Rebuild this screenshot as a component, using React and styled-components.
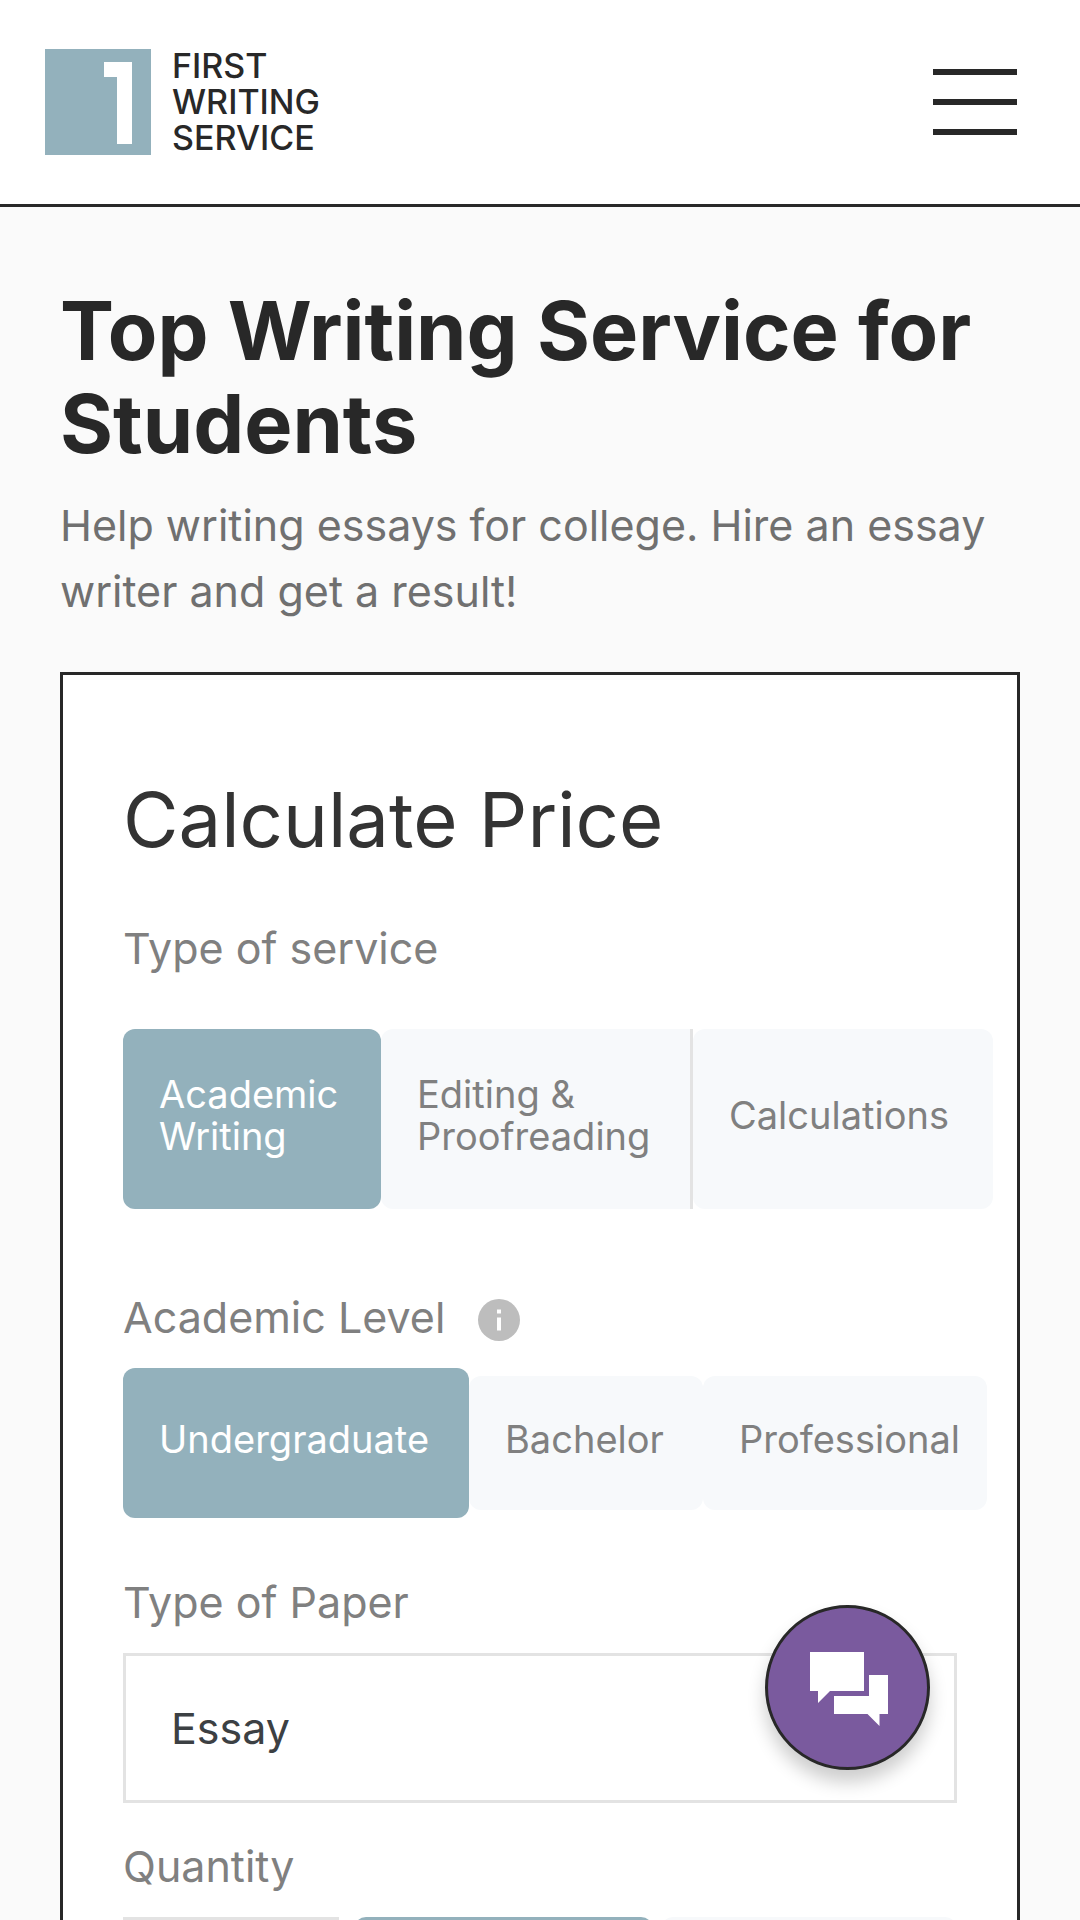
import React, { useState } from 'react';
import styled, { createGlobalStyle } from 'styled-components';

const GlobalStyle = createGlobalStyle`
    * {
        box-sizing: border-box;
    }

    body {
        margin: 0;
        background: #fafafa;
        color: #282828;
        font-family: Inter, Lato, sans-serif;
    }

    button,
    input,
    select {
        font-family: inherit;
    }
`;

const Page = styled.div`
    height: 100vh;
    overflow: hidden;
`;

const Header = styled.header`
    display: flex;
    align-items: center;
    justify-content: space-between;
    height: 207px;
    padding: 0 63px 0 45px;
    background: #fff;
    border-bottom: 3px solid #282828;
`;

const Logo = styled.a`
    display: flex;
    align-items: center;
    gap: 21px;
    color: #282828;
    text-decoration: none;
`;

const LogoMark = styled.svg`
    width: 106px;
    height: 106px;
`;

const LogoText = styled.span`
    display: flex;
    flex-direction: column;
    font-size: 34px;
    font-weight: 500;
    line-height: 36px;
`;

const MenuButton = styled.button`
    display: flex;
    flex-direction: column;
    gap: 24px;
    padding: 0;
    background: none;
    border: 0;
    cursor: pointer;
`;

const MenuBar = styled.span`
    width: 84px;
    height: 6px;
    background: #282828;
`;

const Main = styled.main`
    padding: 78px 60px 0;
`;

const Title = styled.h1`
    margin: 0 0 21px;
    font-size: 81px;
    font-weight: 700;
    line-height: 93px;
`;

const Lead = styled.p`
    margin: 0 0 48px;
    color: #707070;
    font-size: 43px;
    line-height: 66px;
`;

const Card = styled.form`
    padding: 96px 60px 60px;
    background: #fff;
    border: 3px solid #282828;
`;

const CardTitle = styled.h2`
    margin: 0 0 51px;
    color: #333;
    font-size: 76px;
    font-weight: 400;
    line-height: 96px;
`;

const Label = styled.label`
    display: flex;
    align-items: center;
    gap: 33px;
    margin-bottom: ${(props) => props.$space}px;
    color: #808080;
    font-size: 43px;
    line-height: 60px;
`;

const InfoIcon = styled.svg`
    width: 42px;
    height: 42px;
    margin-top: 6px;
`;

const Segments = styled.div`
    display: grid;
    grid-template-columns: ${(props) => props.$columns};
    align-items: center;
    margin: 0 ${(props) => props.$overhang}px ${(props) => props.$space}px 0;
`;

const Segment = styled.button`
    height: ${(props) => props.$height}px;
    padding: 0 24px 9px 36px;
    background: ${(props) => (props.$active ? '#93b1bc' : '#f7f9fb')};
    border: 0;
    border-right: ${(props) => (props.$divider ? '3px solid #e3e3e3' : '0')};
    border-radius: ${(props) => (props.$divider ? '12px 0 0 12px' : '12px')};
    color: ${(props) => (props.$active ? '#fff' : '#808080')};
    font-size: 38px;
    line-height: 42px;
    text-align: left;
    cursor: pointer;
`;

const Select = styled.select`
    display: block;
    width: 100%;
    height: 150px;
    margin-bottom: 33px;
    padding: 0 45px;
    appearance: none;
    background: #fff;
    border: 3px solid #e3e3e3;
    border-radius: 0;
    color: #3c4043;
    font-size: 43px;
`;

const QuantityRow = styled.div`
    display: grid;
    grid-template-columns: 216fr 15fr 299fr 8fr 296fr;
`;

const QuantityInput = styled.input`
    width: 100%;
    height: 150px;
    padding: 0 45px;
    border: 3px solid #e3e3e3;
    font-size: 43px;
`;

const ChatButton = styled.button`
    position: fixed;
    right: 150px;
    bottom: 150px;
    width: 165px;
    height: 165px;
    padding: 3px 0 0 3px;
    background: #7a5a9e;
    border: 3px solid #282828;
    border-radius: 50%;
    box-shadow: 0 12px 18px rgba(0, 0, 0, 0.2);
    cursor: pointer;
`;

const ChatIcon = styled.svg`
    display: block;
    width: 78px;
    height: 74px;
    margin: 0 auto;
`;

const services = ['Academic Writing', 'Editing & Proofreading', 'Calculations'];
const levels = ['Undergraduate', 'Bachelor', 'Professional'];
const papers = ['Essay', 'Research Paper', 'Coursework'];

const App = () => {
    const [service, setService] = useState(services[0]);
    const [level, setLevel] = useState(levels[0]);
    const [spacing, setSpacing] = useState('double');

    return (
        <Page>
            <GlobalStyle />
            <Header>
                <Logo href="#">
                    <LogoMark viewBox="0 0 106 106" aria-hidden="true">
                        <rect width="106" height="106" fill="#93b1bc" />
                        <path d="M59 13H87V95H72V28H59Z" fill="#fff" />
                    </LogoMark>
                    <LogoText>
                        <span>FIRST</span>
                        <span>WRITING</span>
                        <span>SERVICE</span>
                    </LogoText>
                </Logo>
                <MenuButton type="button" aria-label="Menu">
                    <MenuBar />
                    <MenuBar />
                    <MenuBar />
                </MenuButton>
            </Header>
            <Main>
                <Title>Top Writing Service for Students</Title>
                <Lead>Help writing essays for college. Hire an essay writer and get a result!</Lead>
                <Card>
                    <CardTitle>Calculate Price</CardTitle>
                    <Label as="div" id="service-label" $space={51}>Type of service</Label>
                    <Segments
                        role="group"
                        aria-labelledby="service-label"
                        $columns="258fr 312fr 300fr"
                        $overhang={-36}
                        $space={78}
                    >
                        {services.map((name, index) => (
                            <Segment
                                key={name}
                                type="button"
                                aria-pressed={service === name}
                                $active={service === name}
                                $divider={index === 1}
                                $height={180}
                                onClick={() => setService(name)}
                            >
                                {name}
                            </Segment>
                        ))}
                    </Segments>
                    <Label as="div" id="level-label" $space={21}>
                        Academic Level
                        <InfoIcon viewBox="0 0 42 42" aria-hidden="true">
                            <circle cx="21" cy="21" r="21" fill="#bdbdbd" />
                            <path d="M19 10.500h4v4h-4zM19 18.500h4v13h-4z" fill="#fff" />
                        </InfoIcon>
                    </Label>
                    <Segments
                        role="group"
                        aria-labelledby="level-label"
                        $columns="346fr 234fr 284fr"
                        $overhang={-30}
                        $space={54}
                    >
                        {levels.map((name) => (
                            <Segment
                                key={name}
                                type="button"
                                aria-pressed={level === name}
                                $active={level === name}
                                $height={level === name ? 150 : 134}
                                onClick={() => setLevel(name)}
                            >
                                {name}
                            </Segment>
                        ))}
                    </Segments>
                    <Label htmlFor="paper" $space={21}>Type of Paper</Label>
                    <Select id="paper">
                        {papers.map((name) => (
                            <option key={name}>{name}</option>
                        ))}
                    </Select>
                    <Label htmlFor="quantity" $space={21}>Quantity</Label>
                    <QuantityRow>
                        <QuantityInput id="quantity" type="text" />
                        <span />
                        <Segment
                            type="button"
                            aria-label="Double spaced"
                            $active={spacing === 'double'}
                            $height={150}
                            onClick={() => setSpacing('double')}
                        />
                        <span />
                        <Segment
                            type="button"
                            aria-label="Single spaced"
                            $active={spacing === 'single'}
                            $height={150}
                            onClick={() => setSpacing('single')}
                        />
                    </QuantityRow>
                </Card>
            </Main>
            <ChatButton type="button" aria-label="Chat">
                <ChatIcon viewBox="0 0 78 74" aria-hidden="true">
                    <path d="M0 0H54V39H20L8 51V39H0Z" fill="#fff" />
                    <path d="M59 23H78V62H69.500V74L57.500 62H24V44H59Z" fill="#fff" />
                </ChatIcon>
            </ChatButton>
        </Page>
    );
};

export default App;
